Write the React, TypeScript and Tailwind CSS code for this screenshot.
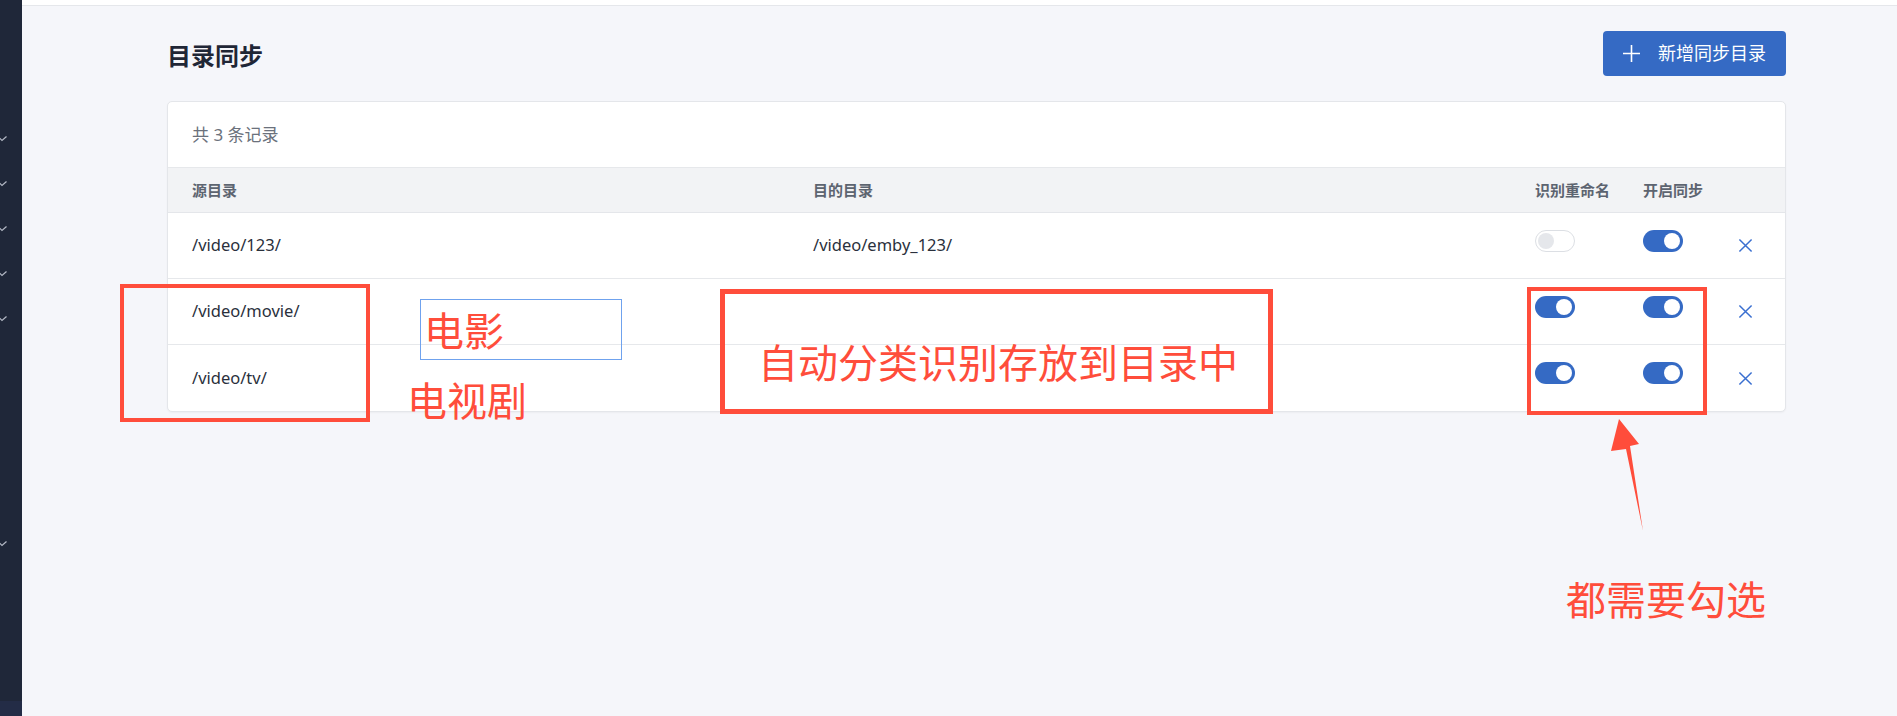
import React from 'react';

const rows = [
  { src: '/video/123/', dst: '/video/emby_123/', rename: false, sync: true },
  { src: '/video/movie/', dst: '', rename: true, sync: true },
  { src: '/video/tv/', dst: '', rename: true, sync: true },
];

const checkYs = [139, 184, 229, 274, 319, 544];

const Toggle: React.FC<{ on: boolean }> = ({ on }) => (
  <div className="mb-[10px]">
    {on ? (
      <div className="w-[40px] h-[22px] rounded-full bg-[#356ac4] flex items-center justify-end pr-[3px]">
        <div className="w-[16px] h-[16px] rounded-full bg-white" />
      </div>
    ) : (
      <div className="w-[40px] h-[22px] rounded-full bg-white border border-[#dcdfe4] flex items-center pl-[2px]">
        <div className="w-[16px] h-[16px] rounded-full bg-[#e5e7eb]" />
      </div>
    )}
  </div>
);

const CloseIcon = () => (
  <svg className="w-[15px] h-[15px] text-[#3a6fd0]" viewBox="0 0 16 16" fill="none" stroke="currentColor" strokeWidth={1.6}>
    <path d="M1.5 1.5l13 13M14.5 1.5l-13 13" />
  </svg>
);

export default function App() {
  return (
    <div className="relative w-[1897px] h-[716px] flex overflow-hidden font-['Noto_Sans','Noto_Sans_CJK_SC',sans-serif] bg-[#f5f6fa]">
      {/* sidebar (collapsed, mostly off screen) */}
      <div className="relative w-[22px] h-full bg-[#1f2739] flex flex-col">
        {checkYs.map((y) => (
          <svg key={y} className="absolute left-0 w-[8px] h-[6px]" style={{ top: y - 3 }} viewBox="0 0 8 6" fill="none" stroke="#b4bac6" strokeWidth={1.2}>
            <path d="M-1 1.5L2 4.5L6.5 0.5" />
          </svg>
        ))}
        <div className="mt-auto h-[15px] bg-[#232c46]" />
      </div>

      <div className="flex-1 flex flex-col">
        <div className="h-[6px] bg-white border-b border-[#e5e7eb]" />

        <div className="pl-[145px] pr-[111px] pt-[25px]">
          <div className="flex items-center justify-between">
            <h1 className="text-[24px] font-bold text-[#1f2636] mt-[4px]">目录同步</h1>
            <button className="h-[45px] flex items-center rounded-[4px] bg-[#356ac4] pl-[20px] pr-[20px] text-white text-[18px]">
              <svg className="w-[17px] h-[17px] mr-[18px]" viewBox="0 0 17 17" fill="none" stroke="currentColor" strokeWidth={1.6}>
                <path d="M8.5 0v17M0 8.5h17" />
              </svg>
              新增同步目录
            </button>
          </div>

          <div className="mt-[25px] bg-white border border-[#e4e6ea] rounded-[5px] shadow-[0_1px_2px_rgba(0,0,0,0.04)] overflow-hidden">
            <div className="h-[66px] border-b border-[#e6e8eb] flex items-center pl-6 text-[17px] text-[#6b717c]">
              共 3 条记录
            </div>
            <div className="h-[45px] bg-[#f2f3f5] border-b border-[#e4e6ea] grid grid-cols-[621px_722px_108px_95px_1fr] items-center text-[15px] font-semibold text-[#5d6470]">
              <div className="pl-6">源目录</div>
              <div className="pl-6">目的目录</div>
              <div className="pl-6">识别重命名</div>
              <div className="pl-6">开启同步</div>
              <div />
            </div>
            {rows.map((r, i) => (
              <div
                key={r.src}
                className={`h-[66px] grid grid-cols-[621px_722px_108px_95px_1fr] items-center text-[16.5px] text-[#2a303c] ${i < rows.length - 1 ? 'border-b border-[#e6e8eb]' : ''}`}
              >
                <div className="pl-6">{r.src}</div>
                <div className="pl-6">{r.dst}</div>
                <div className="pl-6"><Toggle on={r.rename} /></div>
                <div className="pl-6"><Toggle on={r.sync} /></div>
                <div className="pl-6 flex items-center"><CloseIcon /></div>
              </div>
            ))}
          </div>
        </div>
      </div>

      {/* annotations drawn over the screenshot */}
      <div className="absolute left-[120px] top-[284px] w-[250px] h-[138px] border-4 border-[#ff4d3b]" />
      <div className="absolute left-[420px] top-[299px] w-[202px] h-[61px] border border-[#6fa2ee]" />
      <div className="absolute left-[424px] top-[311px] text-[40px] leading-[40px] text-[#ff4d3b]">电影</div>
      <div className="absolute left-[407px] top-[381px] text-[40px] leading-[40px] text-[#ff4d3b]">电视剧</div>
      <div className="absolute left-[720px] top-[289px] w-[553px] h-[125px] border-[5px] border-[#ff4d3b]" />
      <div className="absolute left-[758px] top-[343px] text-[40px] leading-[40px] text-[#ff4d3b]">自动分类识别存放到目录中</div>
      <div className="absolute left-[1527px] top-[287px] w-[180px] h-[128px] border-4 border-[#ff4d3b]" />
      <svg className="absolute left-[1600px] top-[410px] w-[60px] h-[130px]" viewBox="1600 410 60 130">
        <polygon points="1619,419 1639,444 1630,446 1643,531 1626,449 1611,451" fill="#ff4d3b" />
      </svg>
      <div className="absolute left-[1566px] top-[580px] text-[40px] leading-[40px] text-[#ff4d3b]">都需要勾选</div>
    </div>
  );
}
